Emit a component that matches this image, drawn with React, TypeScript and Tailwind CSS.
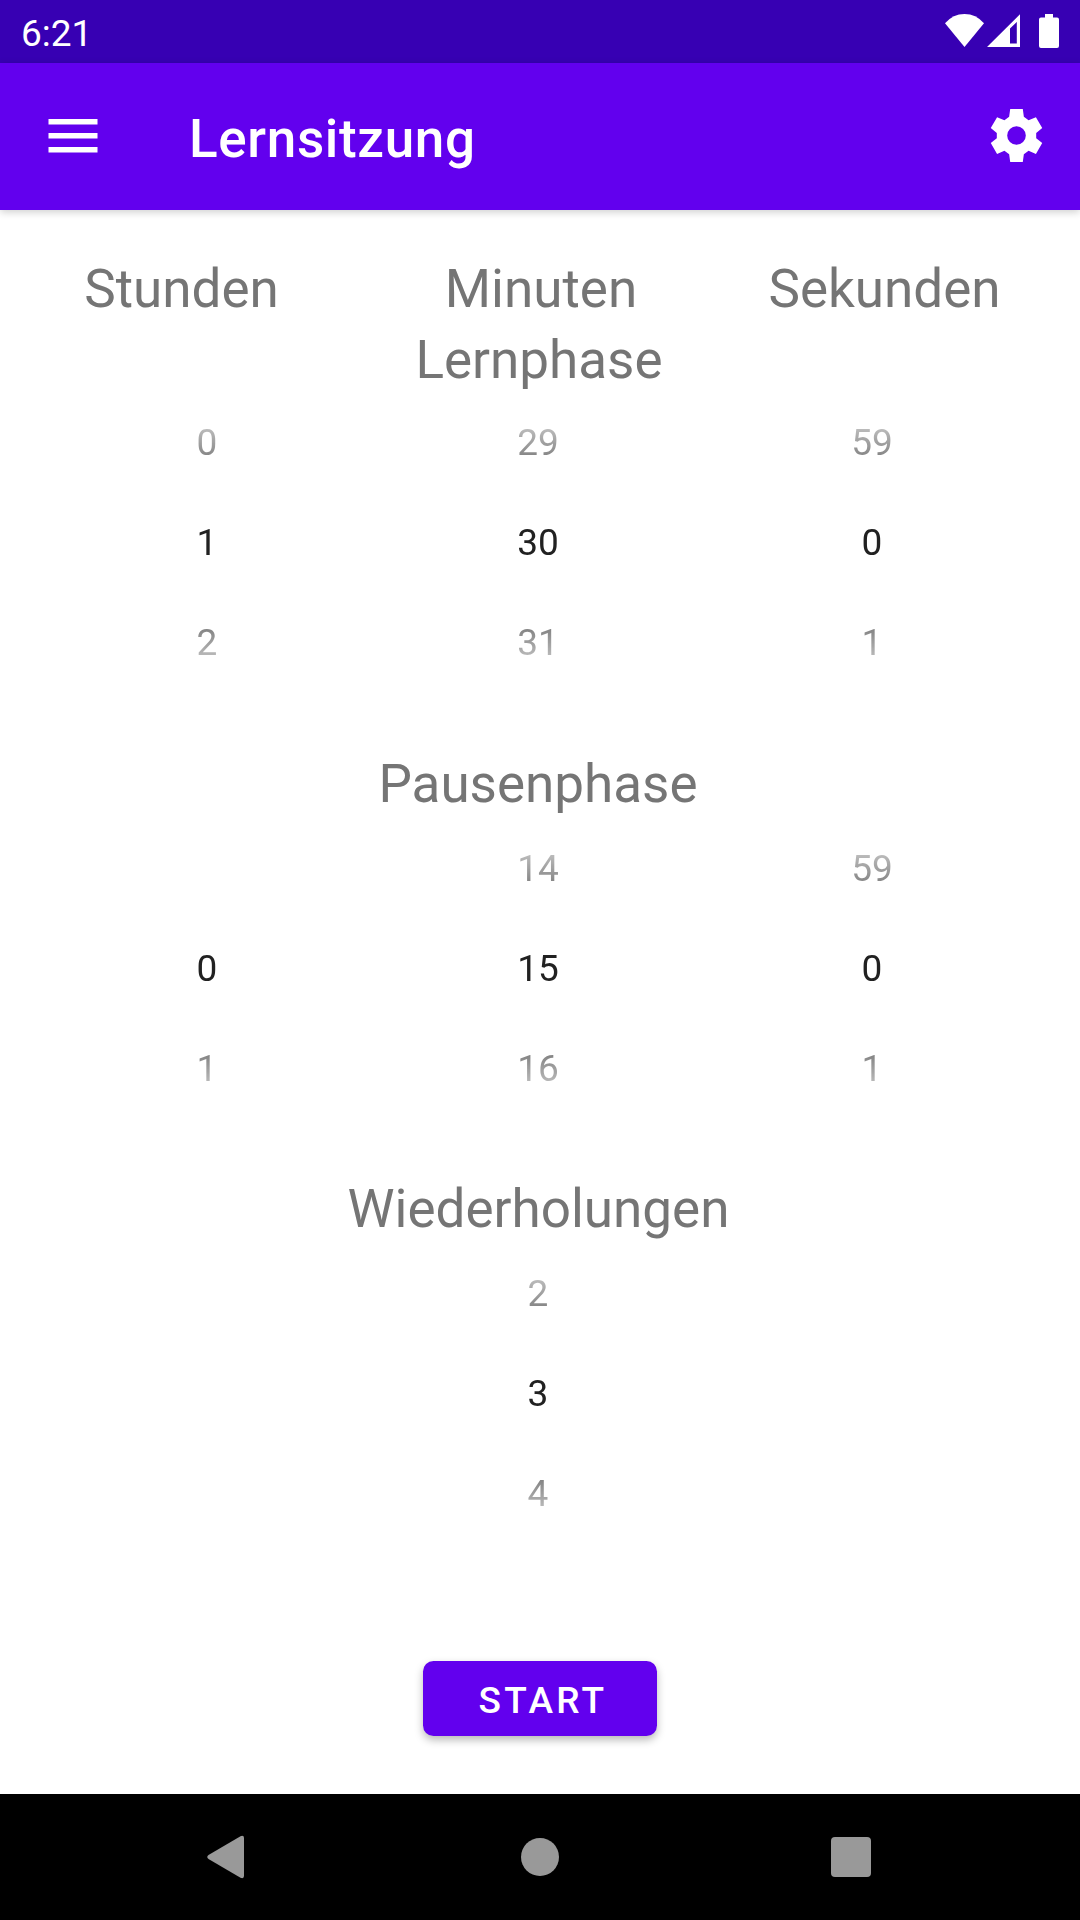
import type { ReactNode } from "react";

type PickerProps = { values: string[]; className?: string };

function Picker({ values, className = "" }: PickerProps) {
  return (
    <div
      className={`grid h-[300px] w-[168px] shrink-0 grid-rows-3 text-center text-[37px] leading-[100px] text-[#212121] [mask-image:linear-gradient(to_bottom,transparent_1px,black_115px,black_185px,transparent_299px)] ${className}`}
    >
      {values.map((v, i) => (
        <span key={i}>{v}</span>
      ))}
    </div>
  );
}

function Phase({ title, nudge, children }: { title: string; nudge: string; children: ReactNode }) {
  return (
    <section className="flex flex-col">
      <h2 className={`h-[62px] text-center text-[53px] leading-[62px] text-[#757575] ${nudge}`}>
        {title}
      </h2>
      {children}
    </section>
  );
}

export default function App() {
  return (
    <div className="flex h-[1920px] w-[1080px] flex-col overflow-hidden bg-white font-[Roboto,sans-serif]">
      <div className="flex h-[63px] shrink-0 items-center justify-between bg-[#3700b3] pl-[21px] text-white">
        <span className="pt-[3px] text-[37px] leading-[43px]">6:21</span>
        <svg className="h-[63px] w-[140px]" viewBox="940 0 140 63" fill="currentColor">
          <path d="M945 23.3Q953 14 964.5 14T984 23.3L964.5 47Z" />
          <path fillRule="evenodd" d="M987 47L1020 14.3V47ZM1010 28.5V43.5H1016.8V22Z" />
          <path d="M1045 14h8v3.5h4q2 0 2 2V46q0 2-2 2h-16q-2 0-2-2V19.5q0-2 2-2h4Z" />
        </svg>
      </div>

      <header className="z-10 flex h-[147px] shrink-0 items-center bg-[#6200ee] text-white shadow-[0_2px_8px_rgba(0,0,0,0.2)]">
        <svg className="mb-px ml-[48px] h-[34px] w-[50px]" viewBox="0 0 50 34" fill="currentColor">
          <path d="M0.5 0h49v5.5h-49zM0.5 14h49v5.5h-49zM0.5 28h49v5.5h-49z" />
        </svg>
        <h1 className="ml-[91px] pt-[5px] text-[53px] font-medium leading-[62px] tracking-[0.0125em]">Lernsitzung</h1>
        <svg className="mr-[32px] mb-[2px] ml-auto size-[63px]" viewBox="-12 -12 24 24" fill="currentColor">
          <path
            fillRule="evenodd"
            d="M-2.4-10.05H2.4L2.8-7.1L4.6-5.85L7.4-7L9.8-2.9L7.5-1V1L9.8 2.9L7.4 7L4.6 5.85L2.8 7.1L2.4 10.05H-2.4L-2.8 7.1L-4.6 5.85L-7.4 7L-9.8 2.9L-7.5 1V-1L-9.8-2.9L-7.4-7L-4.6-5.85L-2.8-7.1ZM0-3.55a3.55 3.55 0 1 0 0 7.1a3.55 3.55 0 1 0 0-7.1z"
          />
        </svg>
      </header>

      <main className="flex flex-1 flex-col pt-[48px]">
        <div className="flex h-[71px] text-[53px] leading-[62px] text-[#757575]">
          <span className="w-[362px] pl-px text-center">Stunden</span>
          <span className="w-[358px] text-center">Minuten</span>
          <span className="w-[329px] text-center">Sekunden</span>
        </div>

        <Phase title="Lernphase" nudge="pr-[2px]">
          <div className="mt-[2px] flex">
            <Picker className="ml-[123px]" values={["0", "1", "2"]} />
            <Picker className="ml-[163px]" values={["29", "30", "31"]} />
            <Picker className="ml-[166px]" values={["59", "0", "1"]} />
          </div>
        </Phase>

        <div className="mt-[60px]">
          <Phase title="Pausenphase" nudge="pr-[4px]">
            <div className="mt-[4px] flex">
              <Picker className="ml-[123px]" values={["", "0", "1"]} />
              <Picker className="ml-[163px]" values={["14", "15", "16"]} />
              <Picker className="ml-[166px]" values={["59", "0", "1"]} />
            </div>
          </Phase>
        </div>

        <div className="mt-[59px]">
          <Phase title="Wiederholungen" nudge="pr-[3px]">
            <div className="mt-[4px] flex">
              <Picker className="ml-[454px]" values={["2", "3", "4"]} />
            </div>
          </Phase>
        </div>

        <button className="mx-auto mt-[117px] h-[75px] w-[234px] rounded-[10.5px] bg-[#6200ee] pt-[2px] pl-[6px] text-[37px] font-medium leading-[75px] tracking-[0.0893em] text-white shadow-[0_4px_8px_rgba(0,0,0,0.28)]">
          START
        </button>
      </main>

      <nav className="flex h-[126px] shrink-0 items-center bg-black">
        <svg className="ml-[207px] h-[44px] w-[37px]" viewBox="0 0 37 44" fill="#999999">
          <path d="M1.5 20L33.5 1.2Q37 0 37 3V41Q37 44 33.5 42.8L1.5 24Q-1 22 1.5 20Z" />
        </svg>
        <span className="ml-[277px] size-[38px] rounded-full bg-[#999999]" />
        <span className="ml-[272px] size-[40px] rounded-[4px] bg-[#999999]" />
      </nav>
    </div>
  );
}
